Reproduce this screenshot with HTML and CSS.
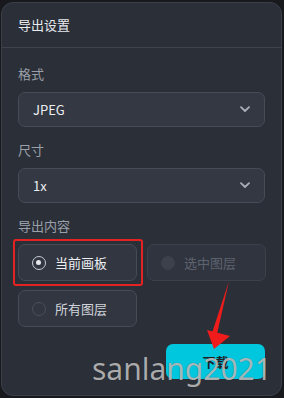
FILE: index.html
```html
<!DOCTYPE html>
<html lang="zh">
<head>
<meta charset="utf-8">
<link rel="stylesheet" href="styles.css">
</head>
<body>
<div class="panel">
  <div class="header">导出设置</div>
  <div class="body">
    <div class="field">
      <div class="label">格式</div>
      <div class="select"><span>JPEG</span>
        <svg class="chev" width="10" height="7" viewBox="0 0 10 7"><path d="M1 1.2 L5 5 L9 1.2" fill="none" stroke="#a9aeb8" stroke-width="1.8" stroke-linecap="round" stroke-linejoin="round"/></svg>
      </div>
    </div>
    <div class="field">
      <div class="label">尺寸</div>
      <div class="select"><span>1x</span>
        <svg class="chev" width="10" height="7" viewBox="0 0 10 7"><path d="M1 1.2 L5 5 L9 1.2" fill="none" stroke="#a9aeb8" stroke-width="1.8" stroke-linecap="round" stroke-linejoin="round"/></svg>
      </div>
    </div>
    <div class="field">
      <div class="label">导出内容</div>
      <div class="radios">
        <div class="radio checked"><span class="dot"></span><span>当前画板</span></div>
        <div class="radio disabled"><span class="dot"></span><span>选中图层</span></div>
        <div class="radio"><span class="dot"></span><span>所有图层</span></div>
      </div>
    </div>
    <div class="actions">
      <button class="download">下载</button>
    </div>
  </div>
</div>
<div class="highlight"></div>
<svg class="arrow" width="284" height="398" viewBox="0 0 284 398">
  <path d="M229 281 L217 334 L212 333 Z" fill="#f01c1c"/>
  <path d="M207 330 L230 336 L214 349 Z" fill="#f01c1c"/>
</svg>
<div class="watermark">sanlang2021</div>
</body>
</html>
```
FILE: styles.css
```css
html, body {
  margin: 0;
  padding: 0;
}
body {
  width: 284px;
  height: 398px;
  background: #17191d;
  font-family: "Noto Sans CJK SC", "Noto Sans", sans-serif;
  position: relative;
  overflow: hidden;
}
.panel {
  position: absolute;
  left: 1px;
  top: 2px;
  width: 279px;
  height: 392px;
  background: #2b2f38;
  border: 1px solid #3a3f4a;
  border-radius: 12px;
}
.header {
  height: 44px;
  line-height: 44px;
  padding-left: 16px;
  color: #e8eaee;
  font-size: 13px;
  border-bottom: 1px solid #3e434e;
}
.body {
  padding: 17px 16px 0 16px;
  display: flex;
  flex-direction: column;
  gap: 14px;
}
.field {
  display: flex;
  flex-direction: column;
  gap: 9px;
}
.label {
  height: 18px;
  line-height: 18px;
  color: #9aa0aa;
  font-size: 13px;
}
.select {
  height: 33px;
  border: 1px solid #464b57;
  border-radius: 7px;
  background: #343843;
  display: flex;
  align-items: center;
  justify-content: space-between;
  padding: 0 14px 0 14px;
  color: #eceef1;
  font-size: 13px;
  font-weight: 400;
}
.radios {
  display: grid;
  grid-template-columns: 119px 119px;
  column-gap: 10px;
  row-gap: 9px;
}
.radio {
  height: 35px;
  border: 1px solid #464b57;
  border-radius: 7px;
  background: #323641;
  display: flex;
  align-items: center;
  gap: 9px;
  padding-left: 13px;
  color: #d0d4da;
  font-size: 13px;
}
.radio .dot {
  width: 14px;
  height: 14px;
  border-radius: 50%;
  border: 1.5px solid #4a505c;
  box-sizing: border-box;
  position: relative;
}
.radio.checked {
  color: #eef0f3;
}
.radio.checked .dot {
  border-color: #c8ccd3;
}
.radio.checked .dot::after {
  content: "";
  position: absolute;
  left: 3px;
  top: 3px;
  width: 5px;
  height: 5px;
  border-radius: 50%;
  background: #e6e8ec;
}
.radio.disabled {
  background: #30343e;
  border-color: #3c414c;
  color: #5d636e;
}
.radio.disabled .dot {
  background: #3c414b;
  border-color: #3c414b;
}
.actions {
  display: flex;
  justify-content: flex-end;
  padding-top: 3px;
}
.download {
  width: 99px;
  height: 35px;
  border: none;
  border-radius: 7px;
  background: #00c6de;
  color: #1b1f26;
  font-family: "Noto Sans CJK SC", sans-serif;
  font-size: 13px;
  font-weight: 700;
}
.highlight {
  position: absolute;
  left: 13px;
  top: 239px;
  width: 126px;
  height: 43px;
  border: 2.5px solid #e42222;
  border-radius: 3px;
}
.arrow {
  position: absolute;
  left: 0;
  top: 0;
}
.watermark {
  position: absolute;
  left: 92px;
  top: 349px;
  font-family: "Noto Sans", sans-serif;
  font-size: 30px;
  line-height: 40px;
  color: rgba(190, 190, 190, 0.88);
  text-shadow: 0 0 1px rgba(0,0,0,0.3);
}
```
